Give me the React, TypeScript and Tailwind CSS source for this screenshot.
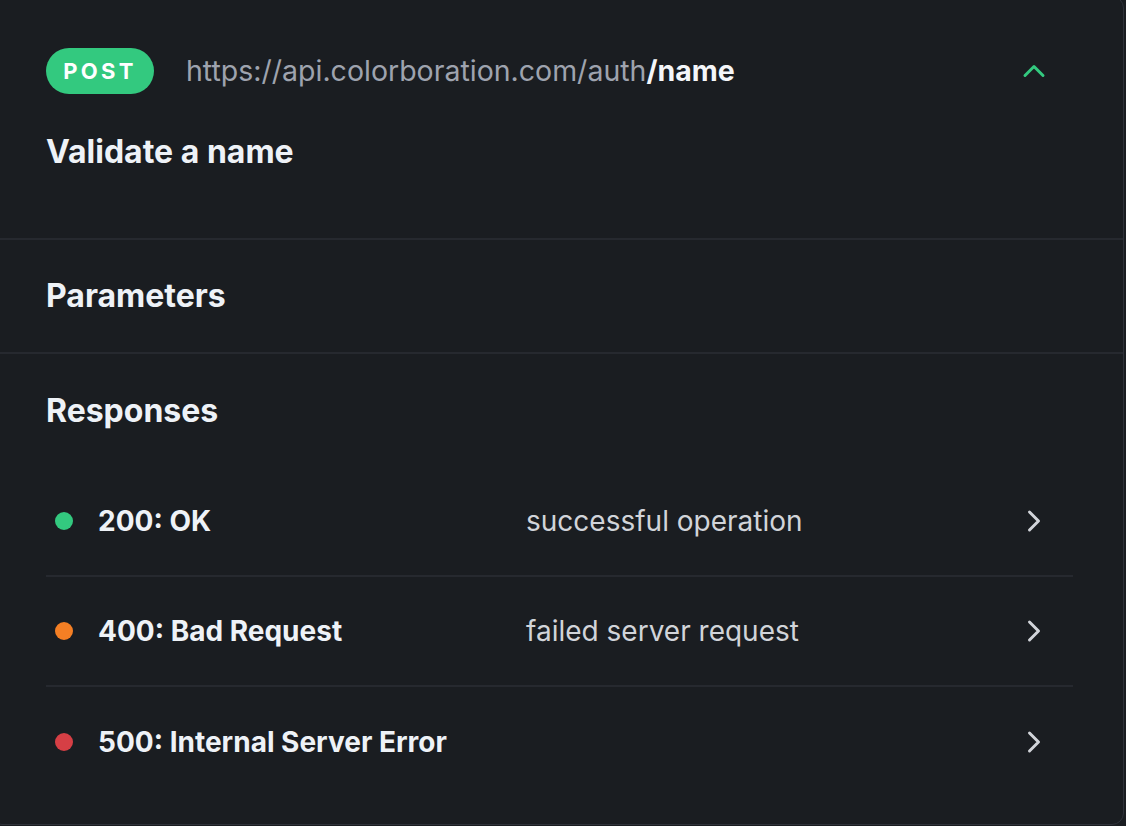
import { ChevronRight, ChevronUp } from "lucide-react";

interface ResponseRow {
  code: string;
  description: string;
  dot: string;
}

const responses: ResponseRow[] = [
  { code: "200: OK", description: "successful operation", dot: "bg-[#33c97f]" },
  { code: "400: Bad Request", description: "failed server request", dot: "bg-[#f47f24]" },
  { code: "500: Internal Server Error", description: "", dot: "bg-[#d63f45]" },
];

export default function App() {
  return (
    <div
      className="h-[826px] w-[1126px] overflow-hidden bg-[#1a1d21] text-[#eef2f7]"
      style={{ fontFamily: "Inter, 'Noto Sans', sans-serif" }}
    >
      <div className="-ml-[10px] -mt-[4px] h-[829px] w-[1134px] rounded-[12px] border border-[#2f323a] bg-[#1a1d21]">
        {/* header */}
        <div className="h-[243px] border-b-2 border-[#26292f] pl-[55px] pr-[71px] pt-[51px]">
          <div className="flex items-center">
            <span className="flex h-[46px] w-[108px] items-center justify-center rounded-full bg-[#33c97f] text-[22px] font-bold tracking-[0.15em] text-white">
              POST
            </span>
            <span className="ml-[32px] text-[28.5px] leading-[38px] text-[#9ea3ae]">
              https://api.colorboration.com/auth
              <span className="font-bold text-[#f4f6f9]">/name</span>
            </span>
            <ChevronUp
              className="ml-auto text-[#33c97f]"
              size={36}
              strokeWidth={2}
            />
          </div>
          <h1 className="mt-[39px] text-[32px] font-bold leading-[38px]">
            Validate a name
          </h1>
        </div>

        {/* parameters */}
        <div className="flex h-[114px] items-center border-b-2 border-[#26292f] pl-[55px]">
          <h2 className="text-[32px] font-bold">Parameters</h2>
        </div>

        {/* responses */}
        <div className="pl-[55px] pr-[50px] pt-[38px]">
          <h2 className="text-[32px] font-bold leading-[38px]">Responses</h2>
          <div className="mt-[37px]">
            {responses.map((r, i) => (
              <div
                className={`flex h-[110px] items-center ${
                  i < responses.length - 1 ? "border-b-2 border-[#26292f]" : ""
                }`}
                key={r.code}
              >
                <span className={`ml-[9px] size-[18px] rounded-full ${r.dot}`} />
                <span className="ml-[25px] w-[428px] text-[28px] font-bold">
                  {r.code}
                </span>
                <span className="text-[28px] text-[#d1d4d9]">
                  {r.description}
                </span>
                <ChevronRight
                  className="ml-auto mr-[21px] text-[#d1d4d9]"
                  size={36}
                  strokeWidth={2}
                />
              </div>
            ))}
          </div>
        </div>
      </div>
    </div>
  );
}
